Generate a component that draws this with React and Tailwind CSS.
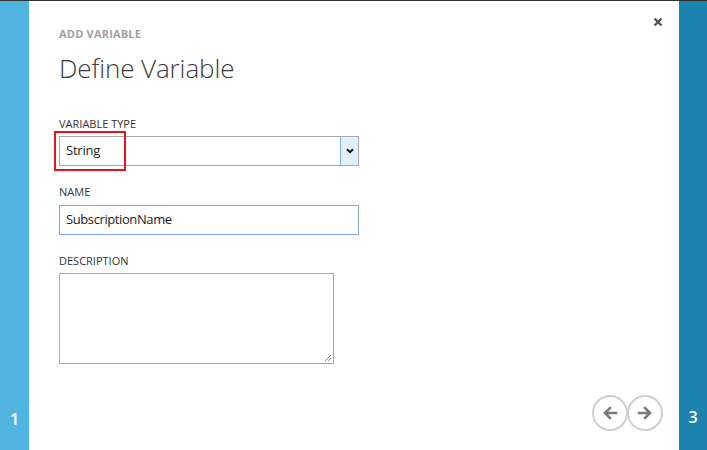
import React from "react";

function ArrowLeft() {
  return (
    <svg width="16" height="14" viewBox="0 0 16 14" fill="none">
      <path d="M14 7H3M8 2L3 7l5 5" stroke="#7a7a7a" strokeWidth="2.6" strokeLinecap="square" strokeLinejoin="miter" />
    </svg>
  );
}
function ArrowRight() {
  return (
    <svg width="16" height="14" viewBox="0 0 16 14" fill="none">
      <path d="M2 7h11M8 2l5 5-5 5" stroke="#7a7a7a" strokeWidth="2.6" strokeLinecap="square" strokeLinejoin="miter" />
    </svg>
  );
}

export default function App() {
  const font = { fontFamily: '"Open Sans", "Noto Sans", sans-serif' };
  return (
    <div className="w-[707px] h-[450px] flex flex-col bg-white overflow-hidden" style={font}>
      <div className="h-px bg-[#333333] shrink-0" />
      <div className="flex flex-1">
        <div className="w-[29px] bg-[#4fb4e0] flex flex-col justify-end items-center pb-[23px]">
          <span className="text-white text-[17px] font-semibold leading-none">1</span>
        </div>
        <div className="flex-1 relative flex flex-col pl-[30px]">
          <button className="absolute top-[14px] right-[14px] w-[14px] h-[14px] flex items-center justify-center">
            <svg width="10" height="10" viewBox="0 0 10 10">
              <path d="M1.5 1.5l7 7M8.5 1.5l-7 7" stroke="#555" strokeWidth="2.4" />
            </svg>
          </button>
          <div className="pt-[25px] text-[11px] font-bold text-[#a0a0a0] leading-[16px] tracking-[0.2px]">ADD VARIABLE</div>
          <div className="mt-[9px] text-[26px] font-light text-[#3c3c3c] leading-[34px] tracking-[-0.1px]">Define Variable</div>

          <div className="mt-[32px] text-[11px] text-[#333] leading-[14px]">VARIABLE TYPE</div>
          <div className="relative mt-[5px] w-[300px]">
            <div className="h-[30px] border border-[#a9a9a9] bg-white flex items-center">
              <span className="pl-[6px] text-[13px] text-[#222] flex-1 tracking-[-0.2px]">String</span>
              <div className="h-full w-[18px] bg-[#e3effb] border-l border-[#7eb4ea] flex items-center justify-center">
                <svg width="8" height="6" viewBox="0 0 8 6">
                  <path d="M1 1.2l3 3 3-3" stroke="#111" strokeWidth="2" fill="none" />
                </svg>
              </div>
            </div>
            <div className="absolute left-[-5px] top-[-5px] w-[72px] h-[40px] border-2 border-[#e8121a]" />
          </div>

          <div className="mt-[19px] text-[11px] text-[#333] leading-[14px]">NAME</div>
          <div className="mt-[6px] w-[300px] h-[30px] border border-[#7ea9df] flex items-center">
            <span className="pl-[6px] text-[13px] text-[#222] tracking-[-0.4px]">SubscriptionName</span>
          </div>

          <div className="mt-[19px] text-[11px] text-[#333] leading-[14px]">DESCRIPTION</div>
          <div className="relative mt-[5px] w-[275px] h-[91px] border border-[#aaaaaa]">
            <svg className="absolute right-[1px] bottom-[1px]" width="8" height="8" viewBox="0 0 8 8">
              <path d="M7 1L1 7M7 4L4 7" stroke="#888" strokeWidth="1" />
            </svg>
          </div>

          <div className="mt-auto mb-[19px] flex justify-end pr-[16px] gap-0">
            <div className="w-[36px] h-[36px] rounded-full border-2 border-[#cfcfcf] flex items-center justify-center">
              <ArrowLeft />
            </div>
            <div className="w-[36px] h-[36px] rounded-full border-2 border-[#cfcfcf] flex items-center justify-center -ml-px">
              <ArrowRight />
            </div>
          </div>
        </div>
        <div className="w-[28px] bg-[#1d83b0] flex flex-col justify-end items-center pb-[25px]">
          <span className="text-white text-[16px] font-semibold leading-none">3</span>
        </div>
      </div>
    </div>
  );
}
